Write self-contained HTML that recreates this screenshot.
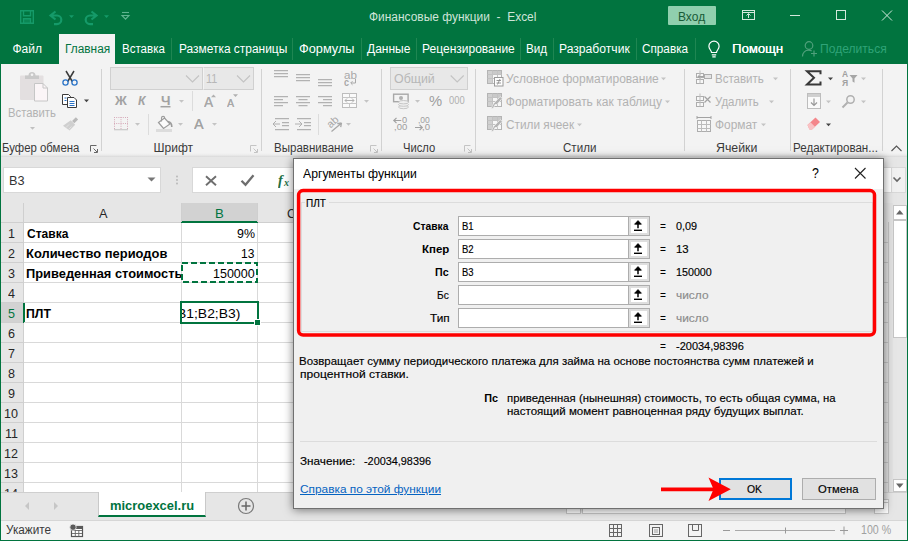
<!DOCTYPE html>
<html lang="ru"><head><meta charset="utf-8"><title>Финансовые функции - Excel</title>
<style>
*{margin:0;padding:0;box-sizing:border-box}
html,body{width:908px;height:541px;overflow:hidden;background:#fff}
body{position:relative;font-family:"Liberation Sans",sans-serif;font-size:12px}
.a{position:absolute}
.t{position:absolute;white-space:pre;line-height:1;transform-origin:0 50%}
svg{position:absolute;overflow:visible}

</style></head>
<body>
<div class="a" id="win" style="left:0;top:0;width:908px;height:541px;background:#01743f"></div>
<div class="a" id="titlebar" style="left:0;top:0;width:908px;height:34px">
<svg width="140" height="34" style="left:0;top:0" viewBox="0 0 140 34" fill="none" stroke="#159a69" stroke-width="1.4">
<path d="M20.7 10.7h12.6v12.6h-12.6z"/><path d="M23.5 10.7v5h7v-5" /><path d="M23.5 23.3v-4.5h7v4.5" fill="#159a69" fill-opacity=".5"/>
<path d="M55.5 11.5l-5 4 5 4M50.5 15.5h6.5a4.3 4.3 0 0 1 0 8.6h-3" stroke-width="2.200"/>
<path d="M69 15.2h5l-2.5 2.8z" fill="#159a69" stroke="none"/>
<path d="M91.5 11.5l5 4-5 4M96.5 15.5h-6.5a4.3 4.3 0 0 0 0 8.6h3" stroke-width="2.200"/>
<path d="M104 15.2h5l-2.5 2.8z" fill="#159a69" stroke="none"/>
</svg>
<svg width="20" height="34" style="left:118px;top:0" viewBox="0 0 20 34" fill="none" stroke="#5fb590" stroke-width="1.1">
<path d="M4 12.5h7"/><path d="M4 15.5h7l-3.5 3.6z"/></svg>
<span class="t" style="left:369.33px;top:11.00px;font-size:12.5px;color:#cfe5d9;transform:scaleX(0.9558);">Финансовые функции  -  Excel</span>
<div class="a" style="left:668px;top:6px;width:48px;height:19px;background:#90cfae;border-radius:1px"></div>
<span class="t" style="left:678.04px;top:10.50px;font-size:12.5px;color:#185c37;transform:scaleX(0.9600);">Вход</span>
<svg width="170" height="34" style="left:738px;top:0" viewBox="738 0 170 34" fill="none" stroke="#d4e9dd" stroke-width="1">
<rect x="742.5" y="10.5" width="12" height="9"/><path d="M742.5 12.5h12"/><path d="M748.5 18v-4M746.5 15.5l2-2 2 2"/>
<path d="M790 15.5h10"/>
<rect x="836.5" y="10.5" width="9" height="9"/>
<path d="M882 10.5l10 10M892 10.5l-10 10"/>
</svg>
</div>
<div class="a" id="tabs" style="left:0;top:34px;width:908px;height:30px">
<div class="a" style="left:59px;top:0;width:56px;height:30px;background:#f3f3f3"></div>
<div class="a" style="left:171.0px;top:4px;width:1px;height:22px;background:#1f8652"></div>
<div class="a" style="left:292.0px;top:4px;width:1px;height:22px;background:#1f8652"></div>
<div class="a" style="left:360.5px;top:4px;width:1px;height:22px;background:#1f8652"></div>
<div class="a" style="left:416.0px;top:4px;width:1px;height:22px;background:#1f8652"></div>
<div class="a" style="left:519.5px;top:4px;width:1px;height:22px;background:#1f8652"></div>
<div class="a" style="left:553.0px;top:4px;width:1px;height:22px;background:#1f8652"></div>
<div class="a" style="left:636.0px;top:4px;width:1px;height:22px;background:#1f8652"></div>
<div class="a" style="left:694.5px;top:4px;width:1px;height:22px;background:#1f8652"></div>
</div>
<span class="t" style="left:12.40px;top:43.00px;font-size:12px;color:#fff;">Файл</span>
<span class="t" style="left:64.61px;top:43.00px;font-size:12px;color:#01743f;transform:scaleX(0.9892);">Главная</span>
<span class="t" style="left:122.14px;top:43.00px;font-size:12px;color:#fff;transform:scaleX(0.9605);">Вставка</span>
<span class="t" style="left:178.61px;top:43.00px;font-size:12px;color:#fff;transform:scaleX(0.9941);">Разметка страницы</span>
<span class="t" style="left:299.36px;top:43.00px;font-size:12px;color:#fff;transform:scaleX(1.0631);">Формулы</span>
<span class="t" style="left:367.00px;top:43.00px;font-size:12px;color:#fff;">Данные</span>
<span class="t" style="left:422.10px;top:43.00px;font-size:12px;color:#fff;">Рецензирование</span>
<span class="t" style="left:526.13px;top:43.00px;font-size:12px;color:#fff;transform:scaleX(0.9705);">Вид</span>
<span class="t" style="left:559.09px;top:43.00px;font-size:12px;color:#fff;transform:scaleX(1.0111);">Разработчик</span>
<span class="t" style="left:642.41px;top:43.00px;font-size:12px;color:#fff;transform:scaleX(0.9785);">Справка</span>
<svg width="16" height="20" style="left:706px;top:39px" viewBox="0 0 16 20" fill="none" stroke="#fff" stroke-width="1.2">
<path d="M5.5 13.5c0-2-2.6-3.3-2.6-6.2a5.1 5.1 0 0 1 10.2 0c0 2.900-2.600 4.200-2.600 6.200z"/><path d="M5.800 15.800h4.400M6.300 17.800h3.400"/></svg>
<span class="t" style="left:732.02px;top:43.00px;font-size:12px;color:#fff;transform:scaleX(1.0890);text-shadow:0.3px 0 0 #fff;">Помощн</span>
<svg width="18" height="18" style="left:801px;top:40px" viewBox="0 0 18 18" fill="none" stroke="#4fa07b" stroke-width="1.2">
<circle cx="8" cy="5.5" r="3.8"/><path d="M1.500 16.500c0-4 2.800-6.300 6-6.300 1.300 0 2.300 .3 3.200 .9"/><path d="M13 10.500v6M10 13.500h6"/></svg>
<span class="t" style="left:820.09px;top:43.00px;font-size:12px;color:#2fa377;transform:scaleX(1.0067);">Поделиться</span>
<div class="a" id="ribbon" style="left:1px;top:64px;width:906px;height:93px;background:linear-gradient(#f3f3f3 0,#f3f3f3 89px,#ececec 91px,#d9d9d9 93px)"></div>
<div class="a" style="left:101.0px;top:69px;width:1px;height:82px;background:#d2d2d2"></div>
<div class="a" style="left:261.0px;top:69px;width:1px;height:82px;background:#d2d2d2"></div>
<div class="a" style="left:381.0px;top:69px;width:1px;height:82px;background:#d2d2d2"></div>
<div class="a" style="left:475.0px;top:69px;width:1px;height:82px;background:#d2d2d2"></div>
<div class="a" style="left:684.0px;top:69px;width:1px;height:82px;background:#d2d2d2"></div>
<div class="a" style="left:789.5px;top:69px;width:1px;height:82px;background:#d2d2d2"></div>
<div class="a" style="left:881.5px;top:69px;width:1px;height:82px;background:#d2d2d2"></div>
<div class="a" style="left:192.0px;top:91px;width:1px;height:20px;background:#dcdcdc"></div>
<div class="a" style="left:148.0px;top:114px;width:1px;height:20.5px;background:#dcdcdc"></div>
<div class="a" style="left:318.0px;top:114px;width:1px;height:21px;background:#dcdcdc"></div>
<div class="a" style="left:110px;top:67px;width:93px;height:23px;background:#e8e8e8;border:1px solid #d0d0d0"></div>
<div class="a" style="left:203px;top:67px;width:51px;height:23px;background:#e8e8e8;border:1px solid #d0d0d0;border-left-color:#f3f3f3"></div>
<div class="a" style="left:390px;top:67px;width:78px;height:23px;background:#e8e8e8;border:1px solid #d0d0d0"></div>
<span class="t" style="left:206.22px;top:72.50px;font-size:12.5px;color:#b7b7b7;transform:scaleX(0.8677);">11</span>
<span class="t" style="left:393.50px;top:72.50px;font-size:12.5px;color:#b7b7b7;transform:scaleX(0.9912);">Общий</span>
<svg width="908" height="160" style="left:0;top:0" viewBox="0 0 908 160" fill="none"><path d="M186.0 75.500l6.500 6.500 6.500-6.500" stroke="#c3c3c3" stroke-width="1.1"/>
<path d="M237.0 75.500l6.500 6.500 6.500-6.500" stroke="#c3c3c3" stroke-width="1.1"/>
<path d="M450.7 75.500l6.500 6.500 6.500-6.500" stroke="#c3c3c3" stroke-width="1.1"/>
<rect x="20" y="75.500" width="23.500" height="24.500" rx="1" fill="#e3dfe0" stroke="none"/>
<path d="M25 79v-3.500h3.500a3.500 3.500 0 0 1 7 0h3.500v3.500z" fill="#c9c9c9" stroke="none"/><circle cx="32" cy="74.800" r="1.300" fill="#f3f3f3"/>
<path d="M34.500 83.500h8.500l4.500 4.500v13h-13z" fill="#fbf5f7" stroke="#c6c6c6"/><path d="M43 83.500v4.500h4.500" stroke="#c6c6c6"/>
<path d="M30 127h5l-2.5 2.800z" fill="#c0c0c0" stroke="none"/>
<path d="M66 71l7.500 12.500M74 71l-7.500 12.500" stroke="#3b3b3b" stroke-width="1.5"/>
<circle cx="65.500" cy="82.500" r="2.600" stroke="#2b74c7" stroke-width="1.300" fill="#f3f3f3"/><circle cx="74.500" cy="82.500" r="2.600" stroke="#2b74c7" stroke-width="1.300" fill="#f3f3f3"/>
<path d="M62.500 94.500h6l2 2v8h-8z" fill="#fff" stroke="#3b3b3b"/>
<path d="M67.500 97.500h6.500l2.500 2.500v7.500h-9z" fill="#fff" stroke="#3b3b3b"/>
<path d="M64.500 98h2M64.500 100.500h2" stroke="#2b74c7"/><path d="M69.500 101.500h5M69.500 103.500h5M69.500 105.500h5" stroke="#2b74c7"/>
<path d="M84 99.5h5l-2.5 2.800z" fill="#444" stroke="none"/>
<path d="M77 118.300l-3.800 3.800" stroke="#b9b9b9" stroke-width="3.200"/><path d="M70.800 120.300l4.400 4.400-5.700 5.800-6.500-4.700z" fill="#cfcfcf" stroke="none"/><path d="M66 127.500l3-3M68.500 129.500l3-3" stroke="#e6e6e6" stroke-width=".8"/>
<path d="M90.5 151.5v-6h6" stroke="#666" stroke-width="1"/><path d="M93.5 148.5l3.500 3.500M97.5 149v3.500h-3.500" stroke="#666" stroke-width="1"/>
<path d="M250.5 151.5v-6h6" stroke="#c4c4c4" stroke-width="1"/><path d="M253.5 148.5l3.500 3.500M257.5 149v3.500h-3.500" stroke="#c4c4c4" stroke-width="1"/>
<path d="M370.5 151.5v-6h6" stroke="#c4c4c4" stroke-width="1"/><path d="M373.5 148.5l3.500 3.500M377.5 149v3.500h-3.500" stroke="#c4c4c4" stroke-width="1"/>
<path d="M464.5 151.5v-6h6" stroke="#c4c4c4" stroke-width="1"/><path d="M467.5 148.5l3.500 3.500M471.5 149v3.500h-3.500" stroke="#c4c4c4" stroke-width="1"/>
<path d="M179 100h5l-2.5 2.800z" fill="#c4c4c4" stroke="none"/>
<path d="M135 123h5l-2.5 2.800z" fill="#c4c4c4" stroke="none"/>
<path d="M178 123h5l-2.5 2.800z" fill="#c4c4c4" stroke="none"/>
<path d="M212 123h5l-2.5 2.800z" fill="#c4c4c4" stroke="none"/>
<path d="M114 117.500h14M114 123.500h14M114.500 117v12M121 117v12M127.500 117v12" stroke="#d6a9b8" stroke-dasharray="1 1.200"/><path d="M114 129.700h14" stroke="#c9c9c9" stroke-width="1.200"/>
<path d="M158.500 122.500l6-4.500 5.500 6-6.500 4.500z" fill="#fbfbfb" stroke="#9c9c9c" stroke-width="1.200"/><path d="M161.500 121.500v-3.500a1.600 1.600 0 0 1 3.200 0v1" stroke="#9c9c9c" stroke-width="1.100"/><path d="M168 121.500c2.500 .5 3.800 2 3.800 5.500" stroke="#9c9c9c" stroke-width="1.600"/><rect x="156" y="129" width="16" height="3" fill="#dcdcdc" stroke="none"/>
<path d="M211 97.200h5l-2.500-2.700z" fill="#b0b0b0" stroke="none"/><path d="M233 94.200h5l-2.500 2.700z" fill="#b0b0b0" stroke="none"/>
<path d="M160.500 106.700h10" stroke="#a2a2a2" stroke-width="1.500"/>
<path d="M274 70.5h14M274 73.5h14M274 76.5h14" stroke="#b2b2b2" stroke-width="1.250"/>
<path d="M296 74.5h14M296 77.5h14M296 80.5h14" stroke="#b2b2b2" stroke-width="1.250"/>
<path d="M318 79.5h14M318 82.5h14M318 85.5h14" stroke="#b2b2b2" stroke-width="1.250"/>
<path d="M274 96.5h14M274 99.5h9M274 102.5h14M274 105.5h9" stroke="#b2b2b2" stroke-width="1.250"/>
<path d="M296.0 96.5h14M298.5 99.5h9M296.0 102.5h14M298.5 105.5h9" stroke="#b2b2b2" stroke-width="1.250"/>
<path d="M318 96.5h14M323 99.5h9M318 102.5h14M323 105.5h9" stroke="#b2b2b2" stroke-width="1.250"/>
<path d="M275 118.5h14M275 129.5h14" stroke="#b2b2b2" stroke-width="1.250"/><path d="M282 122.5h7M282 125.5h7" stroke="#b2b2b2" stroke-width="1.250"/>
<path d="M273 124h7M276 121l-3 3 3 3" stroke="#b0b0b0"/>
<path d="M297 118.5h14M297 129.5h14" stroke="#b2b2b2" stroke-width="1.250"/><path d="M304 122.5h7M304 125.5h7" stroke="#b2b2b2" stroke-width="1.250"/>
<path d="M295 124h7M299 121l3 3-3 3" stroke="#b0b0b0"/>
<path d="M355.500 79v4h-4.500M352.500 81.200l-1.800 1.800 1.800 1.800" stroke="#a8a8a8" stroke-width="1"/>
<rect x="342.500" y="93.500" width="14" height="14" fill="#fafafa" stroke="#bdbdbd"/><path d="M342.500 97.500h14M342.500 103.500h14M349.500 93.500v4M349.500 103.500v4" stroke="#c6c6c6"/><path d="M345 100.500h9M347 98.500l-2 2 2 2M352 98.500l2 2-2 2" stroke="#b0b0b0"/>
<path d="M364 100h5l-2.5 2.800z" fill="#c4c4c4" stroke="none"/>
<path d="M331.500 131.500l9.500-8M341.500 123l-4.200 .6M341.500 123l-.8 4.200" stroke="#a8a8a8" stroke-width="1.300"/>
<path d="M346 123h5l-2.5 2.800z" fill="#c4c4c4" stroke="none"/>
<rect x="393.600" y="94.200" width="14.500" height="7.500" fill="#f3f3f3" stroke="#a8a8a8" stroke-width="1.400"/><circle cx="401" cy="98" r="2" fill="#b0b0b0" stroke="none"/>
<ellipse cx="403.500" cy="107" rx="5" ry="1.700" fill="#efefef" stroke="#c2c2c2" stroke-width=".9"/>
<ellipse cx="403.500" cy="104.6" rx="5" ry="1.700" fill="#efefef" stroke="#c2c2c2" stroke-width=".9"/>
<ellipse cx="403.500" cy="102.2" rx="5" ry="1.700" fill="#efefef" stroke="#c2c2c2" stroke-width=".9"/>
<path d="M415 100h5l-2.5 2.800z" fill="#c4c4c4" stroke="none"/>
<path d="M393.800 120.500h7.500M396.500 117.800l-2.700 2.700 2.700 2.700" stroke="#a2a2a2" stroke-width="1.200"/>
<path d="M415 127.500h7.300M419.600 124.800l2.700 2.700-2.700 2.700" stroke="#a2a2a2" stroke-width="1.200"/>
<rect x="487.5" y="70.5" width="14" height="13" fill="#f7f7f7" stroke="#b4b4b4"/><rect x="488" y="71" width="13" height="3.500" fill="#c9c9c9" stroke="none"/><rect x="488" y="71" width="4.500" height="12" fill="#d0d0d0" stroke="none"/><path d="M487.5 74.5h14M487.5 78.5h14M492.5 70.5v13M497.5 70.5v13" stroke="#c2c2c2"/>
<rect x="494.500" y="77.500" width="8.500" height="8.500" fill="#fdfdfd" stroke="#9a9a9a"/><path d="M496.500 80.500h4.500M496.500 83h4.500M500 79l-2.500 5.500" stroke="#8c8c8c" stroke-width=".9"/>
<rect x="487.5" y="93.5" width="14" height="13" fill="#f7f7f7" stroke="#b4b4b4"/><rect x="488" y="94" width="13" height="3.500" fill="#c9c9c9" stroke="none"/><rect x="488" y="94" width="4.500" height="12" fill="#d0d0d0" stroke="none"/><path d="M487.5 97.5h14M487.5 101.5h14M492.5 93.5v13M497.5 93.5v13" stroke="#c2c2c2"/>
<path d="M502.500 98l-5.500 6.500-2 0-1.500 3.500-2.500 1 1.500-3.500 1-1.800 6.500-7z" fill="#b4b4b4" stroke="#f3f3f3" stroke-width=".7"/>
<rect x="487.5" y="116.5" width="14" height="13" fill="#f7f7f7" stroke="#b4b4b4"/><rect x="488" y="117" width="13" height="3.500" fill="#c9c9c9" stroke="none"/><rect x="488" y="117" width="4.500" height="12" fill="#d0d0d0" stroke="none"/><path d="M487.5 120.5h14M487.5 124.5h14M492.5 116.5v13M497.5 116.5v13" stroke="#c2c2c2"/>
<path d="M502.500 121l-5.500 6.500-2 0-1.500 3.500-2.500 1 1.500-3.500 1-1.800 6.500-7z" fill="#b4b4b4" stroke="#f3f3f3" stroke-width=".7"/>
<path d="M661 77.5h5l-2.5 2.800z" fill="#c4c4c4" stroke="none"/>
<path d="M665 100.5h5l-2.5 2.800z" fill="#c4c4c4" stroke="none"/>
<path d="M577 123.5h5l-2.5 2.800z" fill="#c4c4c4" stroke="none"/>
<rect x="696.5" y="73.5" width="7" height="4" fill="#f7f7f7" stroke="#adadad"/><rect x="696.5" y="79.5" width="7" height="4" fill="#f7f7f7" stroke="#adadad"/><path d="M700 70.5v13" stroke="#bdbdbd"/><rect x="704.5" y="74.5" width="7" height="4" fill="#e4e4e4" stroke="#adadad"/><path d="M704 76.5h-6M700 74.5l-2 2 2 2" stroke="#a2a2a2"/>
<rect x="696.5" y="96.5" width="7" height="4" fill="#f7f7f7" stroke="#adadad"/><rect x="696.5" y="102.5" width="7" height="4" fill="#f7f7f7" stroke="#adadad"/><path d="M700 93.5v13" stroke="#bdbdbd"/><path d="M704.5 96.5l6 6M710.5 96.5l-6 6" stroke="#a2a2a2" stroke-width="1.200"/>
<rect x="697.500" y="120.500" width="13" height="11" fill="#f7f7f7" stroke="#adadad"/><path d="M697.500 124.500h13M697.500 128.500h13M701.500 120.500v11M706.500 120.500v11" stroke="#bcbcbc"/><path d="M697 117.500h14M697 116v3M711 116v3" stroke="#a2a2a2"/>
<path d="M773 77.5h5l-2.5 2.800z" fill="#c4c4c4" stroke="none"/>
<path d="M769 100.5h5l-2.5 2.800z" fill="#c4c4c4" stroke="none"/>
<path d="M761 123.5h5l-2.5 2.800z" fill="#c4c4c4" stroke="none"/>
<path d="M820.500 74.200v-3h-13.500l7 6.600-7 6.600h13.500v-3" stroke="#383838" stroke-width="2" fill="none"/>
<path d="M828 77.5h5l-2.5 2.800z" fill="#444" stroke="none"/>
<path d="M849.500 75h8l-3 3.500v4.200l-2-1.200v-3z" fill="#a6a6a6" stroke="none"/>
<path d="M861 77.5h5l-2.5 2.800z" fill="#c4c4c4" stroke="none"/>
<rect x="807.500" y="93.500" width="13" height="15" fill="#fafafa" stroke="#bdbdbd"/><rect x="808" y="94" width="12" height="3" fill="#cfcfcf" stroke="none"/><path d="M814 98.500v7M811 102.500l3 3 3-3" stroke="#999" stroke-width="1.200"/>
<path d="M826 100.5h5l-2.5 2.800z" fill="#c4c4c4" stroke="none"/>
<circle cx="850.500" cy="99.500" r="3.700" stroke="#b0b0b0" stroke-width="1.500" fill="none"/><path d="M847.500 102.500l-5 5" stroke="#b0b0b0" stroke-width="2"/>
<path d="M861 100.5h5l-2.5 2.800z" fill="#c4c4c4" stroke="none"/>
<path d="M807.500 125l8-7.500 4.500 4.500-8 7.500h-2.500z" fill="#f4868b" stroke="none"/><path d="M807.500 125l3-2.800 4.500 4.500-3 2.800h-2.500z" fill="#f9c3c5" stroke="none"/>
<path d="M826 123.5h5l-2.5 2.800z" fill="#444" stroke="none"/>
<path d="M891.500 151l5-5 5 5" stroke="#555" stroke-width="1.100"/></svg>
<span class="t" style="left:8.15px;top:107.00px;font-size:12px;color:#b2b2b2;transform:scaleX(0.9391);">Вставить</span>
<span class="t" style="left:115.10px;top:95.00px;font-size:12.5px;color:#a2a2a2;font-weight:bold;transform:scaleX(1.0435);">Ж</span>
<span class="t" style="left:137.80px;top:95.00px;font-size:12.5px;color:#a2a2a2;font-weight:bold;font-style:italic;transform:scaleX(0.9756);">К</span>
<span class="t" style="left:160.85px;top:94.50px;font-size:12.5px;color:#a2a2a2;font-weight:bold;transform:scaleX(1.0811);">Ч</span>
<span class="t" style="left:203.50px;top:95.00px;font-size:14px;color:#a8a8a8;transform:scaleX(0.9574);text-shadow:.3px 0 0 #a8a8a8;">A</span>
<span class="t" style="left:226.50px;top:98.00px;font-size:11.5px;color:#a8a8a8;transform:scaleX(0.9091);text-shadow:.3px 0 0 #a8a8a8;">A</span>
<span class="t" style="left:193.50px;top:116.70px;font-size:14px;color:#a2a2a2;transform:scaleX(1.0106);text-shadow:.3px 0 0 #a2a2a2;">A</span>
<span class="t" style="left:343.56px;top:69.50px;font-size:10.5px;color:#a8a8a8;transform:scaleX(1.1071);">ab</span>
<span class="t" style="left:344.23px;top:77.50px;font-size:10px;color:#a8a8a8;font-weight:bold;transform:scaleX(0.9000);">c</span>
<div class="a" style="left:324px;top:113.500px;width:14px;height:12px;transform:rotate(-42deg);transform-origin:50% 50%"><span class="t" style="left:0.59px;top:3.31px;font-size:10.5px;color:#a8a8a8;transform:scaleX(1.0148);">ab</span></div>
<span class="t" style="left:429.01px;top:93.30px;font-size:15px;color:#9e9e9e;transform:scaleX(0.9839);">%</span>
<span class="t" style="left:449.22px;top:96.00px;font-size:10px;color:#b0b0b0;transform:scaleX(0.9362);">000</span>
<span class="t" style="left:402.19px;top:116.20px;font-size:9px;color:#9e9e9e;transform:scaleX(1.0227);">0</span>
<span class="t" style="left:394.16px;top:123.30px;font-size:9px;color:#9e9e9e;transform:scaleX(1.0521);">,00</span>
<span class="t" style="left:417.74px;top:116.20px;font-size:9px;color:#9e9e9e;transform:scaleX(0.9469);">,00</span>
<span class="t" style="left:421.65px;top:123.30px;font-size:9px;color:#9e9e9e;transform:scaleX(1.0624);">,0</span>
<span class="t" style="left:506.10px;top:73.00px;font-size:12px;color:#b2b2b2;">Условное форматирование</span>
<span class="t" style="left:505.80px;top:96.00px;font-size:12px;color:#b2b2b2;">Форматировать как таблицу</span>
<span class="t" style="left:505.81px;top:119.00px;font-size:12px;color:#b2b2b2;transform:scaleX(0.9825);">Стили ячеек</span>
<span class="t" style="left:714.64px;top:73.00px;font-size:12px;color:#b2b2b2;transform:scaleX(0.9593);">Вставить</span>
<span class="t" style="left:715.21px;top:96.00px;font-size:12px;color:#b2b2b2;transform:scaleX(0.9542);">Удалить</span>
<span class="t" style="left:714.90px;top:119.00px;font-size:12px;color:#b2b2b2;transform:scaleX(0.9921);">Формат</span>
<span class="t" style="left:842.11px;top:70.30px;font-size:9px;color:#a0a0a0;font-weight:bold;transform:scaleX(0.9344);">А</span>
<span class="t" style="left:842.41px;top:79.30px;font-size:9px;color:#a0a0a0;font-weight:bold;transform:scaleX(0.9483);">Я</span>
<span class="t" style="left:2.15px;top:142.00px;font-size:12px;color:#3a3a3a;transform:scaleX(0.9484);">Буфер обмена</span>
<span class="t" style="left:153.60px;top:142.00px;font-size:12px;color:#3a3a3a;">Шрифт</span>
<span class="t" style="left:273.64px;top:142.00px;font-size:12px;color:#3a3a3a;transform:scaleX(0.9603);">Выравнивание</span>
<span class="t" style="left:403.16px;top:142.00px;font-size:12px;color:#3a3a3a;transform:scaleX(0.9355);">Число</span>
<span class="t" style="left:563.42px;top:142.00px;font-size:12px;color:#3a3a3a;transform:scaleX(0.9648);">Стили</span>
<span class="t" style="left:716.49px;top:142.00px;font-size:12px;color:#3a3a3a;transform:scaleX(1.0271);">Ячейки</span>
<span class="t" style="left:793.13px;top:142.00px;font-size:12px;color:#3a3a3a;transform:scaleX(0.9640);">Редактирован...</span>
<div class="a" id="fbar" style="left:1px;top:157px;width:906px;height:46px;background:#e6e6e6"></div>
<div class="a" style="left:3px;top:167px;width:158px;height:26px;background:#fff;border:1px solid #d8d8d8"></div>
<span class="t" style="left:9.47px;top:173.50px;font-size:13.5px;color:#333;transform:scaleX(0.9393);">B3</span>
<div class="a" style="left:192px;top:167px;width:700px;height:26px;background:#fff;border:1px solid #d8d8d8"></div>
<div class="a" style="left:891px;top:167px;width:15px;height:26px;background:#f1f1f1;border:1px solid #d8d8d8"></div>
<svg width="908" height="541" style="left:0;top:0" viewBox="0 0 908 541" fill="none"><path d="M147.500 177.500h8l-4 4z" fill="#777" stroke="none"/>
<circle cx="177" cy="176.500" r=".9" fill="#b5b5b5"/><circle cx="177" cy="180" r=".9" fill="#b5b5b5"/><circle cx="177" cy="183.500" r=".9" fill="#b5b5b5"/>
<path d="M206 176.200l10 9M216 176.200l-10 9" stroke="#6e6e6e" stroke-width="1.900"/>
<path d="M241.500 180.800l4 4 8-9.500" stroke="#6e6e6e" stroke-width="2.300"/>
<path d="M893.500 177.500l3.500 3.500 3.500-3.500" stroke="#666" stroke-width="1.600"/></svg>
<span class="t" style="left:277.50px;top:174.00px;font-size:14px;color:#1e7145;font-weight:bold;font-style:italic;transform:scaleX(1.0169);font-family:'Liberation Serif',serif;">f</span>
<span class="t" style="left:284.01px;top:179.00px;font-size:9.5px;color:#1e7145;font-weight:bold;font-style:italic;transform:scaleX(1.0417);font-family:'Liberation Serif',serif;">x</span>
<div class="a" id="grid" style="left:1px;top:203px;width:892px;height:289px;background:#fff;overflow:hidden"></div>
<div class="a" style="left:1px;top:203px;width:892px;height:20px;background:#e6e6e6;border-bottom:1px solid #cfcfcf"></div>
<div class="a" style="left:1px;top:223px;width:23px;height:269px;background:#e6e6e6;border-right:1px solid #cfcfcf"></div>
<div class="a" style="left:181px;top:203px;width:77px;height:20px;background:#d2d2d2;border-bottom:2px solid #01743f"></div>
<div class="a" style="left:1px;top:303px;width:24px;height:20px;background:#d2d2d2;border-right:2px solid #01743f"></div>
<div class="a" style="left:23px;top:203px;width:1px;height:19px;background:#cfcfcf"></div>
<div class="a" style="left:181px;top:203px;width:1px;height:19px;background:#cfcfcf"></div>
<div class="a" style="left:257px;top:203px;width:1px;height:19px;background:#cfcfcf"></div>
<div class="a" style="left:1px;top:242px;width:22px;height:1px;background:#cfcfcf"></div>
<div class="a" style="left:24px;top:242px;width:869px;height:1px;background:#d9d9d9"></div>
<div class="a" style="left:1px;top:262px;width:22px;height:1px;background:#cfcfcf"></div>
<div class="a" style="left:24px;top:262px;width:869px;height:1px;background:#d9d9d9"></div>
<div class="a" style="left:1px;top:282px;width:22px;height:1px;background:#cfcfcf"></div>
<div class="a" style="left:24px;top:282px;width:869px;height:1px;background:#d9d9d9"></div>
<div class="a" style="left:1px;top:302px;width:22px;height:1px;background:#cfcfcf"></div>
<div class="a" style="left:24px;top:302px;width:869px;height:1px;background:#d9d9d9"></div>
<div class="a" style="left:1px;top:322px;width:22px;height:1px;background:#cfcfcf"></div>
<div class="a" style="left:24px;top:322px;width:869px;height:1px;background:#d9d9d9"></div>
<div class="a" style="left:1px;top:342px;width:22px;height:1px;background:#cfcfcf"></div>
<div class="a" style="left:24px;top:342px;width:869px;height:1px;background:#d9d9d9"></div>
<div class="a" style="left:1px;top:362px;width:22px;height:1px;background:#cfcfcf"></div>
<div class="a" style="left:24px;top:362px;width:869px;height:1px;background:#d9d9d9"></div>
<div class="a" style="left:1px;top:382px;width:22px;height:1px;background:#cfcfcf"></div>
<div class="a" style="left:24px;top:382px;width:869px;height:1px;background:#d9d9d9"></div>
<div class="a" style="left:1px;top:402px;width:22px;height:1px;background:#cfcfcf"></div>
<div class="a" style="left:24px;top:402px;width:869px;height:1px;background:#d9d9d9"></div>
<div class="a" style="left:1px;top:422px;width:22px;height:1px;background:#cfcfcf"></div>
<div class="a" style="left:24px;top:422px;width:869px;height:1px;background:#d9d9d9"></div>
<div class="a" style="left:1px;top:442px;width:22px;height:1px;background:#cfcfcf"></div>
<div class="a" style="left:24px;top:442px;width:869px;height:1px;background:#d9d9d9"></div>
<div class="a" style="left:1px;top:462px;width:22px;height:1px;background:#cfcfcf"></div>
<div class="a" style="left:24px;top:462px;width:869px;height:1px;background:#d9d9d9"></div>
<div class="a" style="left:1px;top:482px;width:22px;height:1px;background:#cfcfcf"></div>
<div class="a" style="left:24px;top:482px;width:869px;height:1px;background:#d9d9d9"></div>
<div class="a" style="left:1px;top:502px;width:22px;height:1px;background:#cfcfcf"></div>
<div class="a" style="left:24px;top:502px;width:869px;height:1px;background:#d9d9d9"></div>
<div class="a" style="left:181px;top:223px;width:1px;height:269px;background:#d9d9d9"></div>
<div class="a" style="left:257px;top:223px;width:1px;height:269px;background:#d9d9d9"></div>
<span class="t" style="left:98.50px;top:207.00px;font-size:13.5px;color:#262626;transform:scaleX(0.9444);">A</span>
<span class="t" style="left:215.43px;top:207.00px;font-size:13.5px;color:#01743f;transform:scaleX(0.9722);">B</span>
<div class="a" style="left:258px;top:204px;width:35px;height:18px;overflow:hidden"><span class="t" style="left:28.95px;top:3.00px;font-size:13.5px;color:#262626;transform:scaleX(0.9195);">C</span></div>
<span class="t" style="left:7.63px;top:227.00px;font-size:13.5px;color:#262626;transform:scaleX(0.9300);">1</span>
<span class="t" style="left:7.81px;top:247.00px;font-size:13.5px;color:#262626;transform:scaleX(0.9300);">2</span>
<span class="t" style="left:7.81px;top:267.00px;font-size:13.5px;color:#262626;transform:scaleX(0.9300);">3</span>
<span class="t" style="left:7.81px;top:287.00px;font-size:13.5px;color:#262626;transform:scaleX(0.9300);">4</span>
<span class="t" style="left:7.81px;top:307.00px;font-size:13.5px;color:#01743f;transform:scaleX(0.9300);">5</span>
<span class="t" style="left:7.77px;top:327.00px;font-size:13.5px;color:#262626;transform:scaleX(0.9300);">6</span>
<span class="t" style="left:7.81px;top:347.00px;font-size:13.5px;color:#262626;transform:scaleX(0.9300);">7</span>
<span class="t" style="left:7.81px;top:367.00px;font-size:13.5px;color:#262626;transform:scaleX(0.9300);">8</span>
<span class="t" style="left:7.81px;top:387.00px;font-size:13.5px;color:#262626;transform:scaleX(0.9300);">9</span>
<span class="t" style="left:4.09px;top:407.00px;font-size:13.5px;color:#262626;transform:scaleX(0.9300);">10</span>
<span class="t" style="left:4.60px;top:427.00px;font-size:13.5px;color:#262626;transform:scaleX(0.9300);">11</span>
<span class="t" style="left:4.14px;top:447.00px;font-size:13.5px;color:#262626;transform:scaleX(0.9300);">12</span>
<span class="t" style="left:4.09px;top:467.00px;font-size:13.5px;color:#262626;transform:scaleX(0.9300);">13</span>
<div class="a" style="left:1px;top:483px;width:22px;height:9px;overflow:hidden"><span class="t" style="left:3.20px;top:4.00px;font-size:13.5px;color:#262626;transform:scaleX(0.9300);">14</span></div>
<span class="t" style="left:26.55px;top:227.00px;font-size:13.5px;color:#000;font-weight:bold;transform:scaleX(0.8908);">Ставка</span>
<span class="t" style="left:26.14px;top:247.00px;font-size:13.5px;color:#000;font-weight:bold;transform:scaleX(0.9561);">Количество периодов</span>
<div class="a" style="left:25px;top:263px;width:156px;height:19px;overflow:hidden"><span class="t" style="left:1.14px;top:4.00px;font-size:13.5px;color:#000;font-weight:bold;transform:scaleX(0.9522);">Приведенная стоимость</span></div>
<span class="t" style="left:26.18px;top:307.00px;font-size:13.5px;color:#000;font-weight:bold;transform:scaleX(0.9065);">ПЛТ</span>
<span class="t" style="left:236.65px;top:227.00px;font-size:13.5px;color:#000;transform:scaleX(0.9185);">9%</span>
<span class="t" style="left:240.91px;top:247.00px;font-size:13.5px;color:#000;transform:scaleX(0.8884);">13</span>
<span class="t" style="left:212.57px;top:267.00px;font-size:13.5px;color:#000;transform:scaleX(0.9256);">150000</span>
<svg width="80" height="24" style="left:180px;top:261px" viewBox="180 261 80 24" fill="none"><rect x="182" y="263" width="75" height="19" stroke="#01743f" stroke-width="2" stroke-dasharray="6 3"/></svg>
<div class="a" style="left:180px;top:301px;width:79px;height:23px;border:2px solid #01743f;background:#fff;overflow:hidden"><span class="t" style="left:-5.13px;top:4.00px;font-size:13.5px;color:#000;transform:scaleX(1.0295);">B1;B2;B3)</span></div>
<div class="a" style="left:254px;top:319px;width:7px;height:7px;background:#01743f;border:1px solid #fff"></div>
<div class="a" style="left:893px;top:203px;width:14px;height:289px;background:#e6e6e6"></div>
<div class="a" style="left:893px;top:205px;width:14px;height:15px;background:#fff;border:1px solid #c6c6c6"></div>
<div class="a" style="left:893px;top:220px;width:14px;height:118px;background:#fff;border:1px solid #c6c6c6"></div>
<div class="a" style="left:893px;top:479px;width:14px;height:13px;background:#fff;border:1px solid #c6c6c6"></div>
<svg width="14" height="300" style="left:893px;top:200px" viewBox="893 200 14 300"><path d="M896 214.500h7.500l-3.750-4.500z" fill="#666"/><path d="M896 483.500h7.500l-3.750 4.500z" fill="#666"/></svg>
<div class="a" id="tabbar" style="left:1px;top:492px;width:906px;height:28px;background:#e6e6e6;border-top:1px solid #cfcfcf"></div>
<div class="a" style="left:98px;top:492px;width:108px;height:25px;background:#fff;border-bottom:2px solid #01743f;border-left:1px solid #c9c9c9;border-right:1px solid #c9c9c9"></div>
<span class="t" style="left:109.73px;top:498.70px;font-size:13.5px;color:#01743f;font-weight:bold;transform:scaleX(0.9576);">microexcel.ru</span>
<svg width="300" height="28" style="left:0;top:492px" viewBox="0 492 300 28" fill="none"><path d="M29 502l-4 4 4 4z" fill="#c6c6c6"/><path d="M54 502l4 4-4 4z" fill="#c6c6c6"/><circle cx="246" cy="506" r="7.500" stroke="#7a7a7a" stroke-width="1.200"/><path d="M241.500 506h9M246 501.500v9" stroke="#666" stroke-width="1.500"/></svg>
<div class="a" style="left:566px;top:499px;width:323px;height:15px;background:#e6e6e6"></div>
<div class="a" style="left:566px;top:499px;width:15px;height:15px;background:#fff;border:1px solid #c6c6c6"></div>
<div class="a" style="left:582px;top:499px;width:264px;height:15px;background:#fff;border:1px solid #c6c6c6"></div>
<div class="a" style="left:874px;top:499px;width:15px;height:15px;background:#fff;border:1px solid #c6c6c6"></div>
<div class="a" style="left:884px;top:203px;width:9px;height:289px;background:#e2e2e2"></div>
<div class="a" style="left:888px;top:222px;width:1px;height:270px;background:#c4c4c4"></div>
<div class="a" style="left:884px;top:242px;width:4px;height:1px;background:#c4c4c4"></div>
<div class="a" style="left:884px;top:262px;width:4px;height:1px;background:#c4c4c4"></div>
<div class="a" style="left:884px;top:282px;width:4px;height:1px;background:#c4c4c4"></div>
<div class="a" style="left:884px;top:302px;width:4px;height:1px;background:#c4c4c4"></div>
<div class="a" style="left:884px;top:322px;width:4px;height:1px;background:#c4c4c4"></div>
<div class="a" style="left:884px;top:342px;width:4px;height:1px;background:#c4c4c4"></div>
<div class="a" style="left:884px;top:362px;width:4px;height:1px;background:#c4c4c4"></div>
<div class="a" style="left:884px;top:382px;width:4px;height:1px;background:#c4c4c4"></div>
<div class="a" style="left:884px;top:402px;width:4px;height:1px;background:#c4c4c4"></div>
<div class="a" style="left:884px;top:422px;width:4px;height:1px;background:#c4c4c4"></div>
<div class="a" style="left:884px;top:442px;width:4px;height:1px;background:#c4c4c4"></div>
<div class="a" style="left:884px;top:462px;width:4px;height:1px;background:#c4c4c4"></div>
<div class="a" style="left:884px;top:482px;width:4px;height:1px;background:#c4c4c4"></div>
<div class="a" style="left:884px;top:502px;width:4px;height:1px;background:#c4c4c4"></div>
<div class="a" id="status" style="left:1px;top:520px;width:906px;height:20px;background:#f3f3f3;border-top:1px solid #d6d6d6"></div>
<span class="t" style="left:5.71px;top:523.80px;font-size:12px;color:#3a3a3a;transform:scaleX(0.9787);">Укажите</span>
<svg width="908" height="22" style="left:0;top:519px" viewBox="0 519 908 22" fill="none">
<rect x="71.500" y="526.500" width="11" height="10" fill="#fff" stroke="#555" stroke-width="1.200"/><path d="M72 530.500h10M72 533.500h10M75.300 530v6.500M78.800 530v6.500" stroke="#666" stroke-width=".9"/><rect x="72" y="526" width="10.500" height="3" fill="#5a5a5a"/><circle cx="73" cy="527.200" r="3.200" fill="#5a5a5a" stroke="#f3f3f3" stroke-width=".8"/>
<rect x="609.500" y="524.500" width="12" height="12" stroke="#666"/><path d="M609.500 528.500h12M609.500 532.500h12M613.500 524.500v12M617.500 524.500v12" stroke="#666"/>
<rect x="649.500" y="524.500" width="13" height="12" stroke="#666"/><rect x="652.500" y="527.500" width="7" height="7" stroke="#666"/><path d="M654 530h4M654 532h4" stroke="#888" stroke-width=".8"/>
<rect x="688.500" y="524.500" width="13" height="12" stroke="#666"/><path d="M692.500 524.500v6h6v-6" stroke="#666"/>
<path d="M723 530.500h7" stroke="#999"/><path d="M735 530.500h100" stroke="#a9a9a9"/><path d="M785.500 527.500v6" stroke="#999"/><path d="M840 530.500h8M844 526.500v8" stroke="#999"/>
</svg>
<span class="t" style="left:861.20px;top:524.00px;font-size:12px;color:#a0a0a0;transform:scaleX(0.8853);">100 %</span>
<div class="a" id="dlg" style="left:293px;top:158px;width:591px;height:351px;background:#f0f0f0;border:1px solid #707070;box-shadow:0 1px 9px rgba(0,0,0,.5)"></div>
<div class="a" style="left:294px;top:159px;width:589px;height:30px;background:#fff"></div>
<span class="t" style="left:302.50px;top:168.00px;font-size:12px;color:#000;transform:scaleX(1.0179);">Аргументы функции</span>
<span class="t" style="left:811.56px;top:166.00px;font-size:14px;color:#000;transform:scaleX(0.8824);">?</span>
<svg width="14" height="14" style="left:853px;top:166px" viewBox="853 166 14 14" fill="none"><path d="M855 168l10.500 10.500M865.500 168l-10.500 10.500" stroke="#222" stroke-width="1.100"/></svg>
<div class="a" style="left:301px;top:202px;width:572px;height:130px;border:1px solid #dcdcdc"></div>
<div class="a" style="left:305px;top:198px;width:24px;height:10px;background:#f0f0f0"></div>
<span class="t" style="left:306.26px;top:197.50px;font-size:10.8px;color:#000;transform:scaleX(0.9291);-webkit-text-stroke:.15px #000;">ПЛТ</span>
<svg width="590" height="160" style="left:290px;top:185px" viewBox="290 185 590 160" fill="none"><rect x="298.600" y="190.600" width="575.900" height="144.500" rx="4.500" stroke="#fe0000" stroke-width="3.500"/></svg>
<div class="a" style="left:458px;top:216px;width:171px;height:20px;background:#fff;border:1px solid #adadad"></div>
<div class="a" style="left:628px;top:216px;width:22px;height:20px;background:#fff;border:1px solid #adadad;box-shadow:inset 0 0 0 2px #dedede"></div>
<span class="t" style="left:413.12px;top:221.20px;font-size:10.8px;color:#000;font-weight:bold;transform:scaleX(0.9528);">Ставка</span>
<span class="t" style="left:462.29px;top:221.20px;font-size:10.8px;color:#000;transform:scaleX(0.8821);-webkit-text-stroke:.15px #000;">B1</span>
<span class="t" style="left:660.13px;top:221.20px;font-size:10.8px;color:#000;transform:scaleX(0.9434);">=</span>
<span class="t" style="left:676.20px;top:221.20px;font-size:10.8px;color:#000;transform:scaleX(1.0043);-webkit-text-stroke:.15px #000;">0,09</span>
<div class="a" style="left:458px;top:239px;width:171px;height:20px;background:#fff;border:1px solid #adadad"></div>
<div class="a" style="left:628px;top:239px;width:22px;height:20px;background:#fff;border:1px solid #adadad;box-shadow:inset 0 0 0 2px #dedede"></div>
<span class="t" style="left:421.76px;top:244.20px;font-size:10.8px;color:#000;font-weight:bold;transform:scaleX(1.0600);">Кпер</span>
<span class="t" style="left:462.29px;top:244.20px;font-size:10.8px;color:#000;transform:scaleX(0.8821);-webkit-text-stroke:.15px #000;">B2</span>
<span class="t" style="left:660.13px;top:244.20px;font-size:10.8px;color:#000;transform:scaleX(0.9434);">=</span>
<span class="t" style="left:675.76px;top:244.20px;font-size:10.8px;color:#000;transform:scaleX(1.0549);-webkit-text-stroke:.15px #000;">13</span>
<div class="a" style="left:458px;top:262px;width:171px;height:20px;background:#fff;border:1px solid #adadad"></div>
<div class="a" style="left:628px;top:262px;width:22px;height:20px;background:#fff;border:1px solid #adadad;box-shadow:inset 0 0 0 2px #dedede"></div>
<span class="t" style="left:435.31px;top:267.20px;font-size:10.8px;color:#000;font-weight:bold;transform:scaleX(0.9873);">Пс</span>
<span class="t" style="left:462.30px;top:267.20px;font-size:10.8px;color:#000;transform:scaleX(0.8747);-webkit-text-stroke:.15px #000;">B3</span>
<span class="t" style="left:660.13px;top:267.20px;font-size:10.8px;color:#000;transform:scaleX(0.9434);">=</span>
<span class="t" style="left:675.81px;top:267.20px;font-size:10.8px;color:#000;transform:scaleX(0.9933);-webkit-text-stroke:.15px #000;">150000</span>
<div class="a" style="left:458px;top:285px;width:171px;height:20px;background:#fff;border:1px solid #adadad"></div>
<div class="a" style="left:628px;top:285px;width:22px;height:20px;background:#fff;border:1px solid #adadad;box-shadow:inset 0 0 0 2px #dedede"></div>
<span class="t" style="left:437.05px;top:290.20px;font-size:10.8px;color:#000;transform:scaleX(0.9402);-webkit-text-stroke:.15px #000;">Бс</span>
<span class="t" style="left:660.13px;top:290.20px;font-size:10.8px;color:#000;transform:scaleX(0.9434);">=</span>
<span class="t" style="left:675.94px;top:290.20px;font-size:10.8px;color:#8c8c8c;transform:scaleX(1.1024);-webkit-text-stroke:.15px #8c8c8c;">число</span>
<div class="a" style="left:458px;top:308px;width:171px;height:20px;background:#fff;border:1px solid #adadad"></div>
<div class="a" style="left:628px;top:308px;width:22px;height:20px;background:#fff;border:1px solid #adadad;box-shadow:inset 0 0 0 2px #dedede"></div>
<span class="t" style="left:429.78px;top:313.20px;font-size:10.8px;color:#000;transform:scaleX(1.0906);-webkit-text-stroke:.15px #000;">Тип</span>
<span class="t" style="left:660.13px;top:313.20px;font-size:10.8px;color:#000;transform:scaleX(0.9434);">=</span>
<span class="t" style="left:675.94px;top:313.20px;font-size:10.8px;color:#8c8c8c;transform:scaleX(1.1024);-webkit-text-stroke:.15px #8c8c8c;">число</span>
<svg width="30" height="130" style="left:625px;top:210px" viewBox="625 210 30 130" fill="none"><path d="M638 228.3v-4.500" stroke="#000" stroke-width="1.500"/><path d="M634.600 224.2l3.400-3.600 3.400 3.600z" stroke="#000" stroke-width=".8" fill="#000"/><path d="M634 230.3h8" stroke="#000" stroke-width="1.400"/><path d="M638 251.3v-4.500" stroke="#000" stroke-width="1.500"/><path d="M634.600 247.2l3.400-3.600 3.400 3.600z" stroke="#000" stroke-width=".8" fill="#000"/><path d="M634 253.3h8" stroke="#000" stroke-width="1.400"/><path d="M638 274.3v-4.500" stroke="#000" stroke-width="1.500"/><path d="M634.600 270.2l3.400-3.600 3.400 3.600z" stroke="#000" stroke-width=".8" fill="#000"/><path d="M634 276.3h8" stroke="#000" stroke-width="1.400"/><path d="M638 297.3v-4.500" stroke="#000" stroke-width="1.500"/><path d="M634.600 293.2l3.400-3.600 3.400 3.600z" stroke="#000" stroke-width=".8" fill="#000"/><path d="M634 299.3h8" stroke="#000" stroke-width="1.400"/><path d="M638 320.3v-4.500" stroke="#000" stroke-width="1.500"/><path d="M634.600 316.2l3.400-3.600 3.400 3.600z" stroke="#000" stroke-width=".8" fill="#000"/><path d="M634 322.3h8" stroke="#000" stroke-width="1.400"/></svg>
<span class="t" style="left:660.13px;top:341.00px;font-size:10.8px;color:#000;transform:scaleX(0.9434);">=</span>
<span class="t" style="left:675.59px;top:341.00px;font-size:10.8px;color:#000;transform:scaleX(1.0174);-webkit-text-stroke:.15px #000;">-20034,98396</span>
<span class="t" style="left:299.45px;top:355.50px;font-size:10.8px;color:#000;transform:scaleX(1.0638);-webkit-text-stroke:.15px #000;">Возвращает сумму периодического платежа для займа на основе постоянства сумм платежей и</span>
<span class="t" style="left:299.52px;top:368.80px;font-size:10.8px;color:#000;transform:scaleX(1.1170);-webkit-text-stroke:.15px #000;">процентной ставки.</span>
<span class="t" style="left:484.30px;top:393.00px;font-size:10.8px;color:#000;font-weight:bold;">Пс</span>
<span class="t" style="left:506.76px;top:393.00px;font-size:10.8px;color:#000;transform:scaleX(1.0519);-webkit-text-stroke:.15px #000;">приведенная (нынешняя) стоимость, то есть общая сумма, на</span>
<span class="t" style="left:506.75px;top:406.20px;font-size:10.8px;color:#000;transform:scaleX(1.0674);-webkit-text-stroke:.15px #000;">настоящий момент равноценная ряду будущих выплат.</span>
<div class="a" style="left:300px;top:441px;width:577px;height:1px;background:#dcdcdc"></div>
<span class="t" style="left:299.97px;top:455.50px;font-size:10.8px;color:#000;transform:scaleX(1.0867);-webkit-text-stroke:.15px #000;">Значение:</span>
<span class="t" style="left:364.40px;top:455.50px;font-size:10.8px;color:#000;transform:scaleX(1.0052);-webkit-text-stroke:.15px #000;">-20034,98396</span>
<span class="t" style="left:299.75px;top:484.00px;font-size:10.8px;color:#0563c1;transform:scaleX(1.0980);text-decoration:underline;">Справка по этой функции</span>
<div class="a" style="left:719px;top:478px;width:73px;height:22px;background:#e1e1e1;border:2px solid #0078d7"></div>
<span class="t" style="left:746.52px;top:484.00px;font-size:10.8px;color:#000;transform:scaleX(0.9666);-webkit-text-stroke:.15px #000;">OK</span>
<div class="a" style="left:802px;top:478px;width:74px;height:22px;background:#e1e1e1;border:1px solid #adadad"></div>
<span class="t" style="left:818.48px;top:484.00px;font-size:10.8px;color:#000;transform:scaleX(1.0432);-webkit-text-stroke:.15px #000;">Отмена</span>
<svg width="80" height="30" style="left:658px;top:474px" viewBox="658 474 80 30"><path d="M661 487.400h53v3.800h-53z" fill="#fe0000"/><path d="M730.800 489.300l-22.300-11.800 5 11.800-5 11.800z" fill="#fe0000"/></svg>
</body></html>
